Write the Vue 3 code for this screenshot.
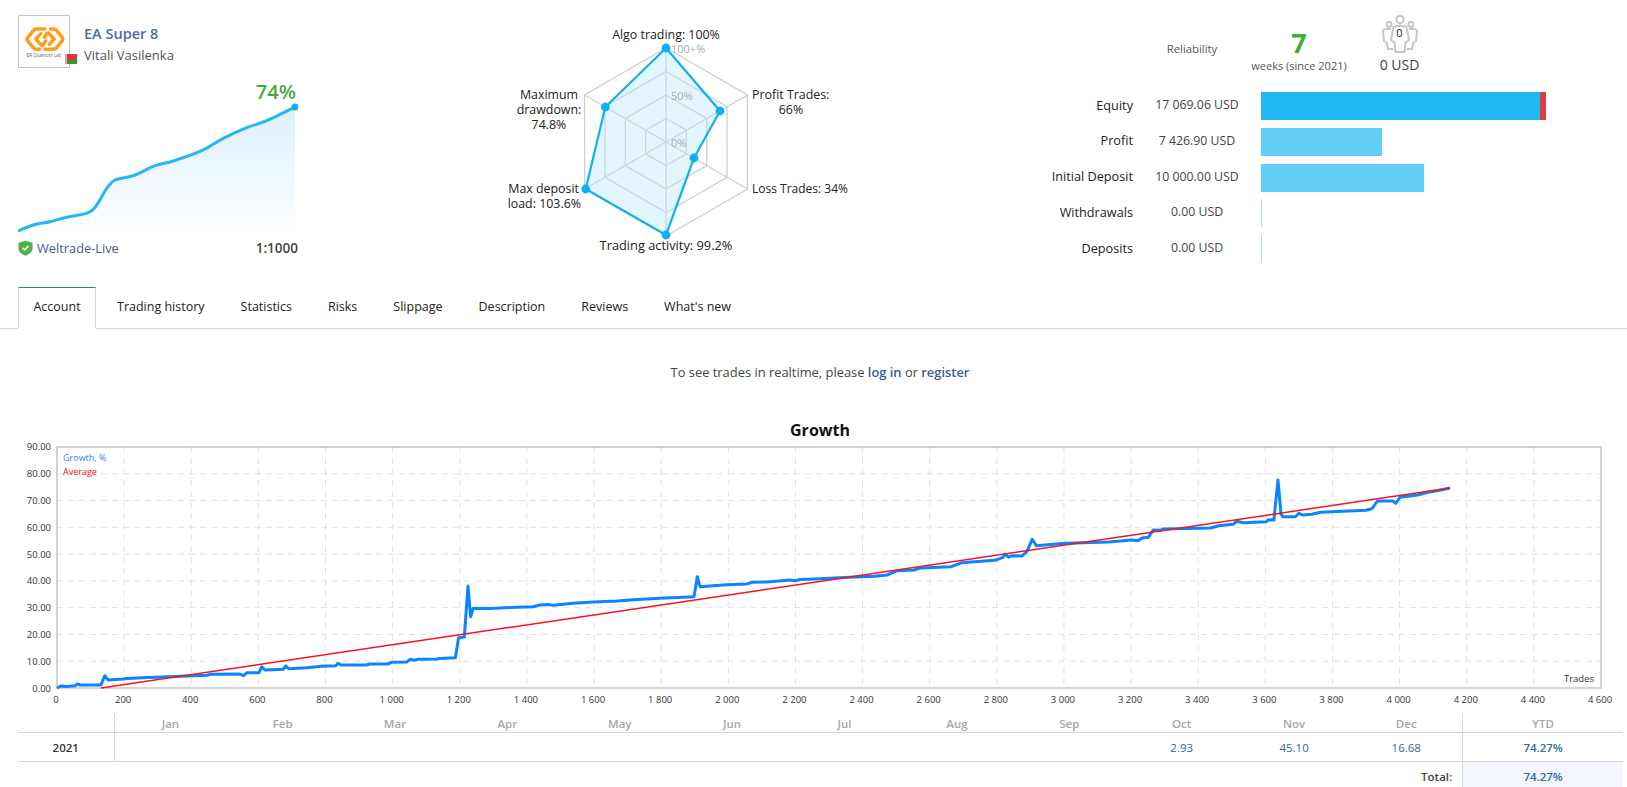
<script setup>
const plotLeft = 57, plotTop = 447, plotRight = 1601, plotBottom = 688

const yTicks = [90, 80, 70, 60, 50, 40, 30, 20, 10, 0].map(v => ({
  label: v.toFixed(2),
  y: plotBottom - v * 2.678
}))
const xTicks = Array.from({ length: 24 }, (_, i) => {
  const v = i * 200
  const s = v >= 1000 ? `${Math.floor(v / 1000)} ${String(v % 1000).padStart(3, '0')}` : String(v)
  return { label: s, x: plotLeft + v * 0.33565 }
})

const growth = [
  [57,688],[60.7,686],[66,686.5],[75,685.7],[77.5,684],[80.4,685],[101,685],[104.6,675.7],[108.2,680],[123,679],
  [127,678.4],[143,677.7],[168,676.7],[207,675.3],[210.7,674.3],[240,674],[243.6,675.7],[247,672.7],[259,672.7],
  [261.8,666.7],[265,670],[283.2,669.3],[285.7,666],[288.6,668.7],[307,667.7],[321.4,666.3],[335.7,665.7],[337.9,663.3],
  [341,665],[366,665],[369.6,664],[387.5,664],[391.8,662.3],[407,662],[410,659.3],[414.3,660.3],[417.9,659.3],[437.5,659],
  [439,658.4],[455.4,657.7],[458.6,637.7],[464.3,637],[468,586],[470.6,616.7],[473.3,608.3],[490,608.5],[510,607.6],
  [533.3,606.7],[540,605],[548,604.5],[553,605.2],[573.3,603.3],[593.3,602],[616.7,601],[633.3,599.7],[660,598.3],
  [694,596.7],[697.3,576.7],[700,586.7],[726.7,584.7],[746.7,584],[751.7,582.3],[766.7,582],[790,580],[795,580.7],
  [800,579.5],[814.5,579],[849.8,577.3],[874.6,576.3],[887,575],[897.4,570.7],[914,570],[920.2,568],[951.3,566.7],
  [961.7,562.7],[994.9,560.3],[1003,557.3],[1005.2,554],[1008.5,557.3],[1011.4,555.7],[1021.8,556],[1026.8,551.7],
  [1032.2,539.3],[1036.3,545.7],[1065.3,543.3],[1108.9,542],[1131.7,540],[1137.9,540.7],[1142,538],[1148.3,537.3],
  [1153.2,530],[1160,530.3],[1162.8,529],[1210.4,528],[1218.7,525.7],[1233.2,524.3],[1236.6,521.3],[1243.6,522.7],
  [1266.4,521.7],[1268.5,519.7],[1273.9,520],[1278,480],[1281,514.3],[1283,516.7],[1295.4,516.7],[1298.8,513.3],
  [1302.5,515],[1312,514.3],[1320.3,512.3],[1366,510.3],[1372,508.7],[1377.5,501],[1392.9,501],[1395.8,503.3],
  [1400,497.3],[1417.7,495],[1428,492.3],[1438.5,490.5],[1450,488]
].map(p => p.join(',')).join(' ')

const sparkPts = [[0,131],[15.3,125],[32,121.7],[48.7,117.3],[70.3,112.7],[78.7,105],[88.7,88.3],[97,80],[115.3,75.7],[137,65.7],[155.3,61],[183.7,50.7],[205.3,38.3],[228.7,27.7],[248.7,20.7],[277,7]]
function smooth(pts) {
  let d = `M${pts[0][0]} ${pts[0][1]}`
  for (let i = 0; i < pts.length - 1; i++) {
    const p0 = pts[i - 1] || pts[i], p1 = pts[i], p2 = pts[i + 1], p3 = pts[i + 2] || p2
    const c1 = [p1[0] + (p2[0] - p0[0]) / 6, p1[1] + (p2[1] - p0[1]) / 6]
    const c2 = [p2[0] - (p3[0] - p1[0]) / 6, p2[1] - (p3[1] - p1[1]) / 6]
    d += ` C${c1[0].toFixed(1)} ${c1[1].toFixed(1)} ${c2[0].toFixed(1)} ${c2[1].toFixed(1)} ${p2[0]} ${p2[1]}`
  }
  return d
}
const sparkLine = smooth(sparkPts)
const sparkArea = sparkLine + ' L277 134 L0 134 Z'

const months = ['Jan','Feb','Mar','Apr','May','Jun','Jul','Aug','Sep','Oct','Nov','Dec']
const values = { Oct: '2.93', Nov: '45.10', Dec: '16.68' }

const rows = [
  { label: 'Equity', value: '17 069.06 USD', width: 279, tone: 'strong', loss: 6 },
  { label: 'Profit', value: '7 426.90 USD', width: 121, tone: 'light' },
  { label: 'Initial Deposit', value: '10 000.00 USD', width: 163, tone: 'light' },
  { label: 'Withdrawals', value: '0.00 USD', width: 1, tone: 'thin' },
  { label: 'Deposits', value: '0.00 USD', width: 1, tone: 'thin' }
]
const tabs = ['Account','Trading history','Statistics','Risks','Slippage','Description','Reviews',"What's new"]

const cx = 176, cy = 132, R = 94
const hex = r => [0,1,2,3,4,5].map(i => {
  const a = i * Math.PI / 3
  return [cx + r * Math.sin(a), cy - r * Math.cos(a)]
})
const rings = [R, R * .75, R * .5, R * .25].map(r => hex(r).map(p => p.join(',')).join(' '))
const spokes = hex(R)
const radarPts = [[176,38],[230,101],[204,148],[176,225],[95.7,179],[115.3,97]]
const radarStr = radarPts.map(p => p.join(',')).join(' ')
</script>

<template>
  <div class="page">
    <section class="top">
      <div class="summary">
        <div class="identity">
          <div class="logo">
            <svg width="50" height="51" viewBox="0 0 50 51">
              <g fill="none" stroke="#ff9d1e" stroke-width="3.2" stroke-linejoin="round" stroke-linecap="round" transform="translate(-1.5,-2.5) scale(1.1)">
                <path d="M25 14 L17 14 Q15.5 14 14.6 15.3 L9.2 22 Q8.3 23.3 9.2 24.6 L14.6 31.2 Q15.5 32.5 17 32.5 L20 32.5"/>
                <path d="M21 18.5 L16.6 23.3 L21.5 28.4 Q22.6 29.5 23.6 28 L25.5 25"/>
                <path d="M25 32.5 L33 32.5 Q34.5 32.5 35.4 31.2 L40.8 24.6 Q41.7 23.3 40.8 22 L35.4 15.3 Q34.5 14 33 14 L30 14"/>
                <path d="M29 28 L33.4 23.3 L28.5 18.2 Q27.4 17.1 26.4 18.6 L24.5 21.6"/>
              </g>
              <text x="25" y="40.5" class="logo-text" text-anchor="middle">BR Quantum Lab</text>
            </svg>
            <span class="flag"><i class="flag-r"></i><i class="flag-g"></i></span>
          </div>
          <div class="names">
            <div class="title">EA Super 8</div>
            <div class="author">Vitali Vasilenka</div>
          </div>
        </div>
        <div class="spark">
          <div class="spark-value">74%</div>
          <svg width="280" height="136" viewBox="0 0 280 136">
            <defs>
              <linearGradient id="sparkFill" x1="0" y1="0" x2="0" y2="1">
                <stop offset="0" stop-color="#dceffe"/>
                <stop offset="1" stop-color="#ffffff"/>
              </linearGradient>
            </defs>
            <path :d="sparkArea" fill="url(#sparkFill)"/>
            <path :d="sparkLine" fill="none" stroke="#23b7f4" stroke-width="3"/>
            <circle cx="277" cy="7" r="3.6" fill="#0eb1f2"/>
          </svg>
        </div>
        <div class="broker">
          <span class="broker-name">
            <svg width="15" height="16" viewBox="0 0 15 16">
              <path d="M7.5 0.5 C10 1.8 12 2.2 14 2.4 Q14.6 2.5 14.6 3.2 L14.6 8 C14.6 12 11 14.5 7.5 15.8 C4 14.5 0.4 12 0.4 8 L0.4 3.2 Q0.4 2.5 1 2.4 C3 2.2 5 1.8 7.5 0.5 Z" fill="#4fb24a"/>
              <path d="M4.6 8 L6.7 9.9 L10.4 6.2" fill="none" stroke="#fff" stroke-width="1.7"/>
            </svg>
            Weltrade-Live
          </span>
          <span class="leverage">1:1000</span>
        </div>
      </div>

      <div class="radar">
        <svg width="380" height="260" viewBox="0 0 380 260">
          <polygon v-for="(r, i) in rings" :key="i" :points="r" fill="none" stroke="#cfcfcf" stroke-width="1.3"/>
          <line v-for="(s, i) in spokes" :key="'s' + i" :x1="cx" :y1="cy" :x2="s[0]" :y2="s[1]" stroke="#cfcfcf" stroke-width="1.3"/>
          <polygon :points="radarStr" fill="#b6e8fc" fill-opacity=".38" stroke="#12b0ef" stroke-width="2.2"/>
          <circle v-for="(p, i) in radarPts" :key="'p' + i" :cx="p[0]" :cy="p[1]" r="4.4" fill="#0cb0f2"/>
          <g class="axis-pct">
            <text x="181" y="43">100+%</text>
            <text x="181" y="90">50%</text>
            <text x="181" y="137">0%</text>
          </g>
          <g class="radar-label">
            <text x="176" y="29" text-anchor="middle">Algo trading: 100%</text>
            <text x="262" y="89">Profit Trades:</text>
            <text x="301" y="104" text-anchor="middle">66%</text>
            <text x="262" y="183" class="narrow">Loss Trades: 34%</text>
            <text x="176" y="240" text-anchor="middle" class="wide">Trading activity: 99.2%</text>
            <text x="89" y="183" text-anchor="end">Max deposit</text>
            <text x="91" y="198" text-anchor="end">load: 103.6%</text>
            <text x="59" y="89" text-anchor="middle">Maximum</text>
            <text x="59" y="104" text-anchor="middle">drawdown:</text>
            <text x="59" y="119" text-anchor="middle">74.8%</text>
          </g>
        </svg>
      </div>

      <div class="stats">
        <div class="stats-head">
          <div class="reliability">Reliability</div>
          <div class="weeks">
            <div class="weeks-num">7</div>
            <div class="weeks-text">weeks (since 2021)</div>
          </div>
          <div class="subs">
            <div class="subs-icon">
              <svg width="38" height="38" viewBox="0 0 38 38" fill="none" stroke="#c6c6c6" stroke-width="2">
                <circle cx="19" cy="4.6" r="3.6"/>
                <circle cx="8" cy="9.5" r="2.4"/>
                <circle cx="30" cy="9.5" r="2.4"/>
                <path d="M10 14 L5 14 Q2 14 2 17 L3 26 L6 28 L7 34 L12 34"/>
                <path d="M28 14 L33 14 Q36 14 36 17 L35 26 L32 28 L31 34 L26 34"/>
                <path d="M12.5 12 Q19 9.5 25.5 12 L28 25 L24.5 27.5 L23.5 37 L14.5 37 L13.5 27.5 L10 25 Z" fill="#fff"/>
              </svg>
              <span class="subs-count">0</span>
            </div>
            <div class="subs-usd">0 USD</div>
          </div>
        </div>
        <div class="bars">
          <div v-for="row in rows" :key="row.label" class="bar-row">
            <div class="bar-label">{{ row.label }}</div>
            <div class="bar-value">{{ row.value }}</div>
            <div class="bar-track">
              <div class="bar" :class="row.tone" :style="{ width: row.width + 'px' }"></div>
              <div v-if="row.loss" class="bar loss" :style="{ width: row.loss + 'px' }"></div>
            </div>
          </div>
        </div>
      </div>
    </section>

    <nav class="tabs">
      <a v-for="(t, i) in tabs" :key="t" class="tab" :class="{ active: i === 0 }">{{ t }}</a>
    </nav>

    <p class="notice">To see trades in realtime, please <a>log in</a> or <a>register</a></p>

    <h2 class="chart-title">Growth</h2>

    <svg class="chart" width="1627" height="280" viewBox="0 440 1627 280">
      <g stroke="#e2e2e2" stroke-width="1" stroke-dasharray="6 5">
        <line v-for="t in yTicks.slice(1, -1)" :key="t.label" :x1="plotLeft" :x2="plotRight" :y1="t.y" :y2="t.y"/>
        <line v-for="t in xTicks.slice(1, -1)" :key="t.label" :x1="t.x" :x2="t.x" :y1="plotTop" :y2="plotBottom"/>
      </g>
      <rect :x="plotLeft" :y="plotTop" :width="plotRight - plotLeft" :height="plotBottom - plotTop" fill="none" stroke="#c8c8c8" stroke-width="1.6"/>
      <text v-for="t in yTicks" :key="'y' + t.label" x="51" :y="t.y + 3.5" text-anchor="end" class="tick">{{ t.label }}</text>
      <text v-for="t in xTicks" :key="'x' + t.label" :x="t.x - 1" y="703" text-anchor="middle" class="tick">{{ t.label }}</text>
      <polyline :points="growth" fill="none" stroke="#0a84ff" stroke-width="3" stroke-linejoin="round"/>
      <line x1="101" y1="688" x2="1450" y2="488" stroke="#f5141c" stroke-width="1.5"/>
      <text x="63" y="461" class="legend blue">Growth, %</text>
      <text x="63" y="475" class="legend red">Average</text>
      <text x="1594" y="682" text-anchor="end" class="tick">Trades</text>
    </svg>

    <table class="returns">
      <colgroup>
        <col class="c-year"/>
        <col v-for="m in months" :key="m" class="c-month"/>
        <col class="c-ytd"/>
      </colgroup>
      <thead>
        <tr>
          <th class="sep"></th>
          <th v-for="(m, i) in months" :key="m" :class="{ sep: i === 11 }">{{ m }}</th>
          <th>YTD</th>
        </tr>
      </thead>
      <tbody>
        <tr>
          <td class="year sep">2021</td>
          <td v-for="(m, i) in months" :key="m" class="val" :class="{ sep: i === 11 }">{{ values[m] }}</td>
          <td class="val ytd">74.27%</td>
        </tr>
        <tr class="total">
          <td colspan="13" class="total-label sep">Total:</td>
          <td class="val ytd total-val">74.27%</td>
        </tr>
      </tbody>
    </table>
  </div>
</template>

<style>
html, body { margin: 0; background: #fff; }
</style>

<style scoped>
.page {
  width: 1627px;
  height: 787px;
  overflow: hidden;
  background: #fff;
  font-family: "Open Sans", "Noto Sans", sans-serif;
  font-size: 12px;
  color: #333;
}
.top { display: flex; height: 287px; }
.summary { width: 280px; margin-left: 18px; padding-top: 15px; box-sizing: border-box; }
.identity { display: flex; height: 53px; }
.logo { position: relative; width: 52px; height: 53px; border: 1px solid #c4c4c4; box-sizing: border-box; flex: none; }
.logo svg { display: block; }
.logo-text { font-size: 4.4px; fill: #666; }
.flag { position: absolute; left: 46px; top: 38px; width: 12px; height: 10px; display: block; }
.flag-r, .flag-g { display: block; margin: 0; }
.flag-r { height: 6px; background: #e2333c; border-left: 2px solid #f4a0a6; }
.flag-g { height: 4px; background: #2c9c32; border-left: 2px solid #f4a0a6; }
.names { margin-left: 14px; }
.title { font-size: 14.5px; font-weight: 600; color: #4a6ea9; line-height: 17px; margin-top: 10px; }
.author { font-size: 13px; color: #4f4f5c; line-height: 17px; margin-top: 5px; }
.spark { position: relative; height: 136px; margin-top: 32px; }
.spark svg { display: block; position: absolute; left: 0; top: 0; }
.spark-value { position: absolute; right: 2px; top: -20px; font-size: 20px; font-weight: 600; line-height: 24px; color: #43ab3c; }
.broker { display: flex; justify-content: space-between; align-items: center; margin-top: 3px; height: 18px; }
.broker-name { display: flex; align-items: center; gap: 4px; color: #4a5a80; font-size: 12.8px; }
.leverage { font-size: 13.5px; font-weight: 600; color: #444; }

.radar { margin-left: 192px; padding-top: 10px; width: 380px; flex: none; }
.radar svg { display: block; }
.axis-pct text { font-size: 11px; fill: #aaa; }
.radar-label text { font-size: 12.4px; fill: #222; }
.radar-label text.narrow { font-size: 12px; }
.radar-label text.wide { font-size: 12.8px; }

.stats { margin-left: 160px; width: 516px; flex: none; padding-top: 12px; box-sizing: border-box; }
.stats-head { display: flex; height: 80px; margin-left: 103px; }
.reliability { width: 118px; text-align: center; font-size: 11.3px; color: #555; padding-top: 29px; box-sizing: border-box; }
.weeks { width: 96px; text-align: center; padding-top: 16px; box-sizing: border-box; }
.weeks-num { font-size: 27px; font-weight: 700; color: #43ab3c; line-height: 30px; }
.weeks-text { font-size: 11px; color: #555; line-height: 14px; margin-top: 1px; white-space: nowrap; }
.subs { width: 79px; margin-left: 13px; text-align: center; }
.subs-icon { position: relative; height: 38px; margin-top: 3px; }
.subs-icon svg { display: block; margin: 0 auto; }
.subs-count { position: absolute; left: 0; right: 0; top: 11px; font-size: 11px; color: #222; line-height: 14px; }
.subs-usd { font-size: 14px; color: #444; line-height: 18px; margin-top: 3px; }
.bars { display: grid; row-gap: 7.75px; }
.bar-row { display: grid; grid-template-columns: 103px 128px 1fr; height: 28px; align-items: center; }
.bar-label { text-align: right; font-size: 12.7px; color: #222; white-space: nowrap; padding-bottom: 3px; }
.bar-value { text-align: center; font-size: 12.3px; color: #444; white-space: nowrap; padding-bottom: 3px; }
.bar-track { display: flex; height: 28px; }
.bar { height: 28px; }
.bar.strong { background: #20b8f3; }
.bar.light { background: #62cdf5; }
.bar.thin { background: #a8dff6; }
.bar.loss { background: #e03c3f; }

.tabs { display: flex; height: 42px; box-sizing: border-box; padding-left: 18px; border-bottom: 1px solid #d6d6d6; }
.tab {
  box-sizing: border-box;
  height: 42px;
  padding: 11px 0 0;
  margin: 0 18px;
  font-size: 12.5px;
  line-height: 18px;
  color: #222;
  white-space: nowrap;
}
.tab.active {
  margin: 0 3px 0 0;
  width: 78px;
  text-align: center;
  background: #fff;
  border: 1px solid #d6d6d6;
  border-top: 1px solid #4a6ea9;
  border-bottom-color: #fff;
  padding-top: 10px;
}
.notice { margin: 34px 0 0; text-align: center; font-size: 12.9px; line-height: 18px; color: #444; padding-left: 13px; }
.notice a { color: #3a5a94; font-weight: 600; }
.chart-title { margin: 38px 0 0; text-align: center; font-size: 16px; font-weight: 700; line-height: 22px; color: #111; padding-left: 13px; }
.chart { display: block; margin-top: -1px; }
.tick { font-size: 9.5px; fill: #333; }
.legend { font-size: 9px; }
.legend.blue { fill: #3d7ee0; }
.legend.red { fill: #e8141c; }

.returns {
  margin: -6px 0 0 18px;
  width: 1605px;
  table-layout: fixed;
  border-collapse: collapse;
  font-size: 11.5px;
}
.c-year { width: 96px; }
.c-month { width: 112.4px; }
.returns th { height: 18px; padding: 0; font-weight: 600; color: #a6a6a6; text-align: center; border-bottom: 1px solid #d6d6d6; }
.returns td { height: 28px; padding: 0; text-align: center; }
.returns .sep { border-right: 1px solid #d6d6d6; }
.returns tbody tr:first-child td { border-bottom: 1px solid #d6d6d6; }
.year { color: #333; font-weight: 600; }
.val { color: #2d6a9f; }
.ytd { font-weight: 600; }
.total-label { text-align: right !important; padding-right: 10px !important; font-weight: 600; color: #444; }
.total-val { background: #f3f6fc; }
</style>
